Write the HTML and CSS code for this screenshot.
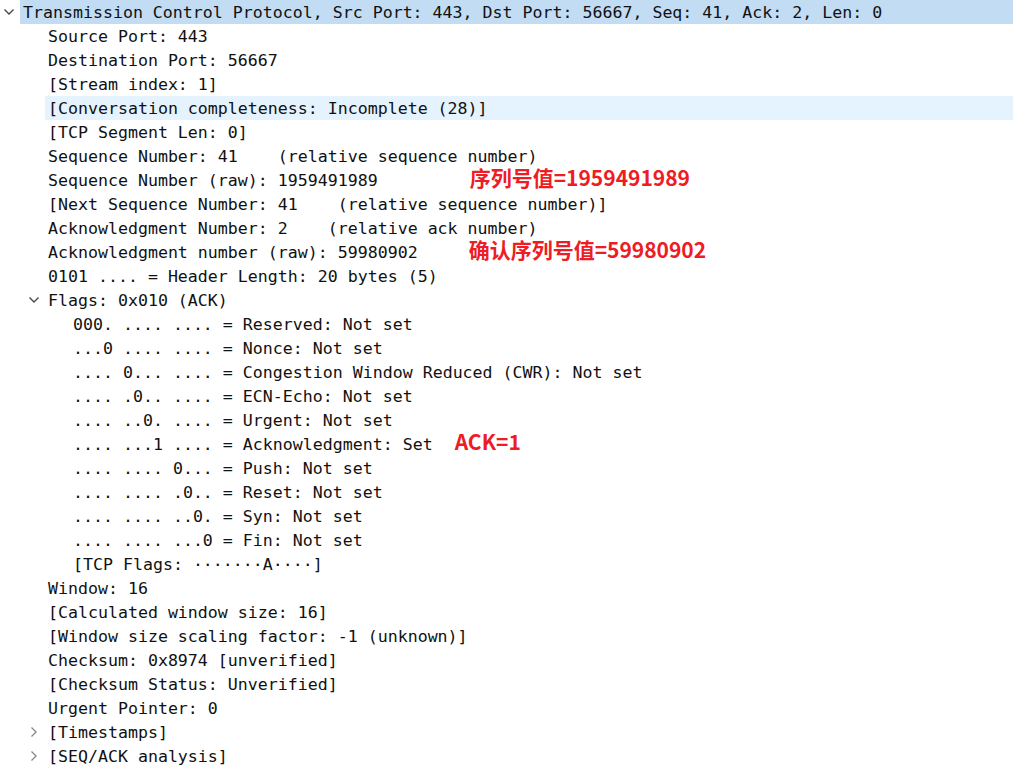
FILE: index.html
```html
<!DOCTYPE html>
<html>
<head>
<meta charset="utf-8">
<link rel="stylesheet" href="styles.css">
</head>
<body>
<div class="tree">
  <div class="row sel l0"><span class="tw"><svg width="12" height="8" viewBox="0 0 12 8"><polyline points="1.5,1.5 6,6 10.5,1.5" fill="none" stroke="#444" stroke-width="1.3"/></svg></span><span class="lb">Transmission Control Protocol, Src Port: 443, Dst Port: 56667, Seq: 41, Ack: 2, Len: 0</span></div>
  <div class="row l1"><span class="tw"></span><span class="lb">Source Port: 443</span></div>
  <div class="row l1"><span class="tw"></span><span class="lb">Destination Port: 56667</span></div>
  <div class="row l1"><span class="tw"></span><span class="lb">[Stream index: 1]</span></div>
  <div class="row l1 hov"><span class="tw"></span><span class="lb">[Conversation completeness: Incomplete (28)]</span></div>
  <div class="row l1"><span class="tw"></span><span class="lb">[TCP Segment Len: 0]</span></div>
  <div class="row l1"><span class="tw"></span><span class="lb">Sequence Number: 41    (relative sequence number)</span></div>
  <div class="row l1"><span class="tw"></span><span class="lb">Sequence Number (raw): 1959491989<span class="note n1">序列号值=1959491989</span></span></div>
  <div class="row l1"><span class="tw"></span><span class="lb">[Next Sequence Number: 41    (relative sequence number)]</span></div>
  <div class="row l1"><span class="tw"></span><span class="lb">Acknowledgment Number: 2    (relative ack number)</span></div>
  <div class="row l1"><span class="tw"></span><span class="lb">Acknowledgment number (raw): 59980902<span class="note n2">确认序列号值=59980902</span></span></div>
  <div class="row l1"><span class="tw"></span><span class="lb">0101 .... = Header Length: 20 bytes (5)</span></div>
  <div class="row l1"><span class="tw"><svg width="12" height="8" viewBox="0 0 12 8"><polyline points="1.5,1.5 6,6 10.5,1.5" fill="none" stroke="#444" stroke-width="1.3"/></svg></span><span class="lb">Flags: 0x010 (ACK)</span></div>
  <div class="row l2"><span class="tw"></span><span class="lb">000. .... .... = Reserved: Not set</span></div>
  <div class="row l2"><span class="tw"></span><span class="lb">...0 .... .... = Nonce: Not set</span></div>
  <div class="row l2"><span class="tw"></span><span class="lb">.... 0... .... = Congestion Window Reduced (CWR): Not set</span></div>
  <div class="row l2"><span class="tw"></span><span class="lb">.... .0.. .... = ECN-Echo: Not set</span></div>
  <div class="row l2"><span class="tw"></span><span class="lb">.... ..0. .... = Urgent: Not set</span></div>
  <div class="row l2"><span class="tw"></span><span class="lb">.... ...1 .... = Acknowledgment: Set<span class="note n3">ACK=1</span></span></div>
  <div class="row l2"><span class="tw"></span><span class="lb">.... .... 0... = Push: Not set</span></div>
  <div class="row l2"><span class="tw"></span><span class="lb">.... .... .0.. = Reset: Not set</span></div>
  <div class="row l2"><span class="tw"></span><span class="lb">.... .... ..0. = Syn: Not set</span></div>
  <div class="row l2"><span class="tw"></span><span class="lb">.... .... ...0 = Fin: Not set</span></div>
  <div class="row l2"><span class="tw"></span><span class="lb">[TCP Flags: ·······A····]</span></div>
  <div class="row l1"><span class="tw"></span><span class="lb">Window: 16</span></div>
  <div class="row l1"><span class="tw"></span><span class="lb">[Calculated window size: 16]</span></div>
  <div class="row l1"><span class="tw"></span><span class="lb">[Window size scaling factor: -1 (unknown)]</span></div>
  <div class="row l1"><span class="tw"></span><span class="lb">Checksum: 0x8974 [unverified]</span></div>
  <div class="row l1"><span class="tw"></span><span class="lb">[Checksum Status: Unverified]</span></div>
  <div class="row l1"><span class="tw"></span><span class="lb">Urgent Pointer: 0</span></div>
  <div class="row l1"><span class="tw"><svg width="8" height="12" viewBox="0 0 8 12"><polyline points="1.5,1.5 6,6 1.5,10.5" fill="none" stroke="#888" stroke-width="1.3"/></svg></span><span class="lb">[Timestamps]</span></div>
  <div class="row l1"><span class="tw"><svg width="8" height="12" viewBox="0 0 8 12"><polyline points="1.5,1.5 6,6 1.5,10.5" fill="none" stroke="#888" stroke-width="1.3"/></svg></span><span class="lb">[SEQ/ACK analysis]</span></div>
</div>
</body>
</html>
```
FILE: styles.css
```css
html, body {
  margin: 0;
  padding: 0;
  background: #ffffff;
}
.tree {
  font-family: "DejaVu Sans Mono", "Liberation Mono", monospace;
  font-size: 16.6px;
  color: #111;
}
.row {
  display: flex;
  height: 24px;
  white-space: pre;
}
.l1 { padding-left: 25px; }
.l2 { padding-left: 50px; }
.tw {
  width: 20px;
  flex: none;
  display: flex;
  align-items: center;
  justify-content: center;
  padding-right: 2px;
  box-sizing: border-box;
}
.lb {
  flex: 1;
  padding-left: 3px;
  padding-top: 1px;
  line-height: 24px;
  box-sizing: border-box;
}
.sel .lb { background: #c1dcf3; }
.hov .lb { background: #e5f3ff; }
.note {
  font-family: "Noto Sans CJK SC", "Noto Sans", sans-serif;
  font-weight: bold;
  font-size: 21px;
  line-height: 0;
  color: #ee1c25;
}
.n1 { margin-left: 92px; }
.n2 { margin-left: 51px; }
.n3 { margin-left: 22px; }
```
